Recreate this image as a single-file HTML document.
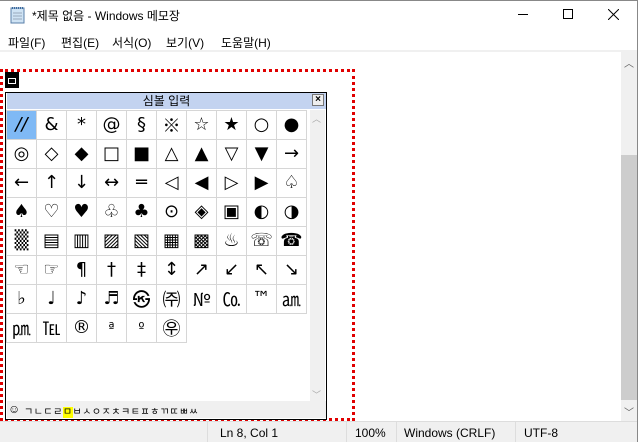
<!DOCTYPE html>
<html><head><meta charset="utf-8"><style>
*{margin:0;padding:0;box-sizing:border-box}
body{width:638px;height:442px;overflow:hidden;background:#fff;font-family:"Liberation Sans","Noto Sans CJK KR",sans-serif;position:relative}
.a{position:absolute}
#win{left:0;top:0;width:638px;height:442px;border-right:1px solid #888;border-top:1px solid #888}
.title{left:32px;top:7px;font-size:12px;color:#000}
.menu{top:34px;font-size:12px;color:#000}
table{border-collapse:collapse;position:absolute;left:6px;top:110px}
td{width:30px;height:29px;border:1px solid #d6d6d6;text-align:center;vertical-align:middle;font-size:18px;font-family:"DejaVu Sans","Noto Sans CJK KR",sans-serif;color:#000;padding:0;line-height:1}
td.k{font-family:"Noto Sans CJK KR","DejaVu Sans",sans-serif}
td.s{background:#7fb9f5}
.st{top:426px;font-size:12px;color:#000}
.sep{top:422px;width:1px;height:20px;background:#ddd}
</style></head><body>
<div id="win" class="a"></div>
<svg class="a" style="left:9px;top:5px" width="18" height="20"><rect x="2" y="3" width="13" height="15" fill="#cfe3f4" stroke="#5a7fa8"/><line x1="3" y1="3" x2="15" y2="3" stroke="#3a6aa0" stroke-width="2" stroke-dasharray="1 1"/><line x1="4" y1="8" x2="13" y2="8" stroke="#9ab"/><line x1="4" y1="11" x2="13" y2="11" stroke="#9ab"/><line x1="4" y1="14" x2="13" y2="14" stroke="#9ab"/></svg>
<div class="a title">*제목 없음 - Windows 메모장</div>
<div class="a" style="left:518px;top:14px;width:10px;height:1px;background:#000"></div>
<div class="a" style="left:563px;top:9px;width:10px;height:10px;border:1px solid #000"></div>
<svg class="a" style="left:608px;top:9px" width="11" height="11"><path d="M0 0L11 11M11 0L0 11" stroke="#000" stroke-width="1"/></svg>
<div class="a menu" style="left:8px">파일(F)</div>
<div class="a menu" style="left:61px">편집(E)</div>
<div class="a menu" style="left:112px">서식(O)</div>
<div class="a menu" style="left:166px">보기(V)</div>
<div class="a menu" style="left:221px">도움말(H)</div>
<div class="a" style="left:0;top:50px;width:637px;height:2px;background:#f0f0f0"></div>
<div class="a" style="left:621px;top:52px;width:16px;height:369px;background:#f0f0f0"></div>
<div class="a" style="left:621px;top:155px;width:16px;height:245px;background:#cdcdcd"></div>
<div class="a" style="left:624px;top:55px;font-size:10px;color:#606060">︿</div>
<div class="a" style="left:624px;top:404px;font-size:10px;color:#606060">﹀</div>
<div class="a" style="left:0;top:421px;width:637px;height:21px;background:#f0f0f0;border-top:1px solid #ddd"></div>
<div class="a sep" style="left:207px"></div>
<div class="a sep" style="left:346px"></div>
<div class="a sep" style="left:396px"></div>
<div class="a sep" style="left:515px"></div>
<div class="a st" style="left:220px">Ln 8, Col 1</div>
<div class="a st" style="left:355px">100%</div>
<div class="a st" style="left:404px">Windows (CRLF)</div>
<div class="a st" style="left:524px">UTF-8</div>
<div class="a" style="left:0;top:69px;width:355px;height:352px;border:3px dotted #e00000"></div>
<div class="a" style="left:5px;top:72px;width:14px;height:16px;background:#000"></div>
<div class="a" style="left:8px;top:78px;width:8px;height:6px;border:1px solid #fff"></div>
<div class="a" style="left:5px;top:92px;width:322px;height:328px;border:1.5px solid #000;background:#fff"></div>
<div class="a" style="left:7px;top:93px;width:319px;height:16px;background:#c3d3f0;text-align:center;font-size:12px;line-height:16px">심볼 입력</div>
<div class="a" style="left:312px;top:94px;width:12px;height:12px;background:#eee;border:1px solid #777;font-size:10px;line-height:10px;text-align:center;font-weight:bold">×</div>
<div class="a" style="left:310px;top:110px;width:15px;height:291px;background:#f0f0f0"></div>
<div class="a" style="left:312px;top:112px;font-size:9px;color:#aaa">︿</div>
<div class="a" style="left:312px;top:388px;font-size:9px;color:#aaa">﹀</div>
<div class="a" style="left:7px;top:401px;width:319px;height:17px;background:#f0f0f0"></div>
<div class="a" style="left:8px;top:402px;font-size:12px">☺</div>
<div class="a" style="left:24px;top:403px;font-size:10px;letter-spacing:0.5px">ㄱㄴㄷㄹ<span style="background:#ff0">ㅁ</span>ㅂㅅㅇㅈㅊㅋㅌㅍㅎㄲㄸㅃㅆ</div>
<table>
<tr><td class="s"><i>//</i></td><td>&amp;</td><td>*</td><td>@</td><td>§</td><td class="k">※</td><td>☆</td><td>★</td><td>○</td><td>●</td></tr>
<tr><td>◎</td><td>◇</td><td>◆</td><td>□</td><td>■</td><td>△</td><td>▲</td><td>▽</td><td>▼</td><td>→</td></tr>
<tr><td>←</td><td>↑</td><td>↓</td><td>↔</td><td>═</td><td>◁</td><td>◀</td><td>▷</td><td>▶</td><td>♤</td></tr>
<tr><td>♠</td><td>♡</td><td>♥</td><td>♧</td><td>♣</td><td>⊙</td><td>◈</td><td>▣</td><td>◐</td><td>◑</td></tr>
<tr><td>▒</td><td>▤</td><td>▥</td><td>▨</td><td>▧</td><td>▦</td><td>▩</td><td>♨</td><td>☏</td><td>☎</td></tr>
<tr><td>☜</td><td>☞</td><td>¶</td><td>†</td><td>‡</td><td>↕</td><td>↗</td><td>↙</td><td>↖</td><td>↘</td></tr>
<tr><td>♭</td><td>♩</td><td>♪</td><td>♬</td><td class="k">㉿</td><td class="k">㈜</td><td class="k">№</td><td class="k">㏇</td><td>™</td><td class="k">㏂</td></tr>
<tr><td class="k">㏘</td><td class="k">℡</td><td>®</td><td style="font-size:13px">ª</td><td style="font-size:13px">º</td><td class="k">㉾</td><td style="border:none"></td><td style="border:none"></td><td style="border:none"></td><td style="border:none"></td></tr>
</table>
</body></html>
